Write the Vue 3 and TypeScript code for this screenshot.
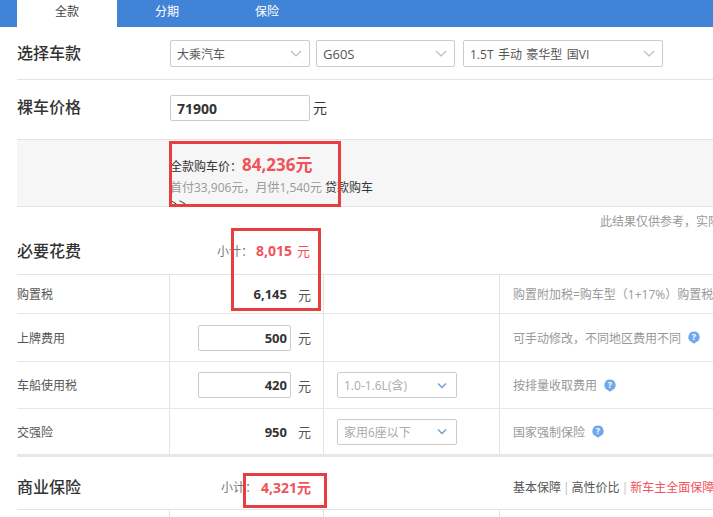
<script setup lang="ts">
interface Row {
  name: string
  h: number
  value: string
  input: boolean
  opt: string
  note: string
  help: boolean
}
const tabs: string[] = ['全款', '分期', '保险']
const selects: { text: string; cls: string }[] = [
  { text: '大乘汽车', cls: 's1' },
  { text: 'G60S', cls: 's2' },
  { text: '1.5T 手动 豪华型 国VI', cls: 's3' },
]
const rows: Row[] = [
  { name: '购置税', h: 39, value: '6,145', input: false, opt: '', note: '购置附加税=购车型（1+17%）购置税', help: false },
  { name: '上牌费用', h: 48, value: '500', input: true, opt: '', note: '可手动修改，不同地区费用不同', help: true },
  { name: '车船使用税', h: 47, value: '420', input: true, opt: '1.0-1.6L(含)', note: '按排量收取费用', help: true },
  { name: '交强险', h: 46, value: '950', input: false, opt: '家用6座以下', note: '国家强制保险', help: true },
]
</script>

<template>
  <div class="page">
    <nav class="tabs">
      <span v-for="(t, i) in tabs" :key="t" class="tab" :class="{ on: i === 0 }">{{ t }}</span>
    </nav>

    <section class="line pick">
      <h2 class="title">选择车款</h2>
      <div v-for="s in selects" :key="s.text" class="select" :class="s.cls">
        <span>{{ s.text }}</span>
        <svg class="chev" width="12" height="7" viewBox="0 0 12 7"><path d="M1 1l5 5 5-5" fill="none" stroke="#bbb" stroke-width="1.2" /></svg>
      </div>
    </section>

    <section class="bare">
      <h2 class="title">裸车价格</h2>
      <div class="price-box">71900</div>
      <span class="yuan-big">元</span>
    </section>

    <section class="summary">
      <div class="sum-total">全款购车价：<b>84,236元</b></div>
      <div class="sum-sub"><span class="grey">首付33,906元，月供1,540元</span> 贷款购车</div>
      <div class="sum-more">&gt;&gt;</div>
    </section>

    <p class="disclaimer">此结果仅供参考，实际费用以当地为准</p>

    <section class="subhead need">
      <h2 class="title">必要花费</h2>
      <span class="sub-label">小计：</span>
      <b class="sub-val">8,015</b>
      <b class="sub-unit">元</b>
    </section>

    <div class="table">
      <div v-for="r in rows" :key="r.name" class="row" :style="{ height: r.h + 'px' }">
        <div class="c1">{{ r.name }}</div>
        <div class="c2">
          <span v-if="r.input" class="num-box">{{ r.value }}</span>
          <b v-else class="num">{{ r.value }}</b>
          <span class="unit">元</span>
        </div>
        <div class="c3">
          <div v-if="r.opt" class="opt">
            <span>{{ r.opt }}</span>
            <svg width="12" height="7" viewBox="0 0 12 7"><path d="M2 1.5l4 4 4-4" fill="none" stroke="#6f9fd0" stroke-width="1.4" /></svg>
          </div>
        </div>
        <div class="c4">
          <span>{{ r.note }}</span>
          <svg v-if="r.help" class="help" width="12" height="13" viewBox="0 0 12 13">
            <path d="M6 .4a5.6 5.6 0 0 1 2.4 10.66L6 12.8l-2.4-1.74A5.6 5.6 0 0 1 6 .4z" fill="#6fa8ee" />
            <text x="6" y="9" text-anchor="middle" class="help-q">?</text>
          </svg>
        </div>
      </div>
    </div>

    <section class="subhead biz">
      <h2 class="title">商业保险</h2>
      <span class="biz-label">小计：</span>
      <b class="biz-val">4,321元</b>
      <div class="plans">
        <span>基本保障</span><i>|</i><span>高性价比</span><i>|</i><span class="red">新车主全面保障</span>
      </div>
    </section>

    <div class="row stub">
      <div class="c1"></div>
      <div class="c2"></div>
      <div class="c3"></div>
      <div class="c4"></div>
    </div>

    <div class="mark m1"></div>
    <div class="mark m2"></div>
    <div class="mark m3"></div>
  </div>
</template>

<style>
html, body { margin: 0; background: #fff; overflow: hidden; }
</style>

<style scoped>
.page {
  position: relative;
  width: 713px;
  height: 517px;
  overflow: hidden;
  background: #fff;
  color: #333;
  font-family: "Open Sans", "Noto Sans CJK SC", sans-serif;
  font-size: 12px;
  white-space: nowrap;
}
.tabs {
  display: flex;
  height: 27px;
  padding-left: 17px;
  background: #4183d7;
}
.tab {
  width: 100px;
  padding-top: 2px;
  text-align: center;
  line-height: 19px;
  color: #fff;
  box-sizing: border-box;
}
.tab.on { background: #fff; color: #444; }
.title {
  margin: 0;
  font-size: 16px;
  font-weight: 500;
  line-height: 24px;
  color: #333;
}
.line.pick {
  display: flex;
  align-items: center;
  margin-left: 17px;
  padding-top: 1px;
  box-sizing: border-box;
  border-bottom: 1px solid #e3e3e3;
  height: 53px;
}
.pick .title { width: 153px; margin-bottom: 2px; }
.select {
  display: flex;
  align-items: center;
  justify-content: space-between;
  box-sizing: border-box;
  height: 27px;
  padding: 0 7px 0 6px;
  border: 1px solid #ccc;
  border-radius: 2px;
  color: #555;
}
.s1 { width: 140px; margin-right: 6px; }
.s2 { width: 139px; margin-right: 8px; font-size: 13px; }
.s3 { width: 200px; word-spacing: 1.3px; }
.bare {
  display: flex;
  align-items: center;
  height: 59px;
  padding-left: 17px;
  padding-bottom: 3px;
  box-sizing: border-box;
}
.bare .title { width: 153px; margin-bottom: 3px; }
.price-box {
  box-sizing: border-box;
  width: 140px;
  height: 26px;
  padding-left: 6px;
  line-height: 25px;
  border: 1px solid #ccc;
  border-radius: 2px;
  font-size: 14px;
  font-weight: 700;
}
.yuan-big { margin-left: 3px; margin-bottom: 3px; font-size: 14px; }
.summary {
  box-sizing: border-box;
  height: 68px;
  margin-left: 17px;
  padding: 14px 0 0 153px;
  background: #f6f6f6;
  border-top: 1px solid #e3e3e3;
  border-bottom: 1px solid #e3e3e3;
  overflow: hidden;
}
.sum-total { height: 22px; line-height: 22px; }
.sum-total b { font-size: 17px; font-weight: 700; color: #f0525a; }
.sum-sub { line-height: 18px; margin-top: 3px; }
.grey { color: #999; }
.sum-more { line-height: 14px; letter-spacing: 2px; }
.disclaimer {
  margin: 0;
  height: 28px;
  padding-left: 600px;
  line-height: 29px;
  color: #999;
}
.subhead {
  display: flex;
  align-items: center;
  margin-left: 17px;
  box-sizing: border-box;
  position: relative;
}
.subhead > * { flex: none; }
.need { height: 39px; padding-bottom: 8px; }
.need .title { width: 200px; }
.sub-label { color: #777; width: 39px; }
.sub-val { color: #f0525a; font-size: 14px; font-weight: 700; width: 41px; }
.sub-unit { color: #f0525a; font-size: 13px; font-weight: 400; }
.table { margin-left: 17px; border-top: 1px solid #e3e3e3; }
.row {
  display: grid;
  grid-template-columns: 153px 154px 176px 1fr;
  box-sizing: border-box;
  border-bottom: 1px solid #e8e8e8;
}
.row > div {
  display: flex;
  align-items: center;
  box-sizing: border-box;
  min-width: 0;
}
.c1 { color: #555; border-right: 1px solid #e3e3e3; }
.c2 {
  justify-content: flex-end;
  padding-right: 8px;
  border-right: 1px solid #e3e3e3;
}
.c3 { padding-left: 13px; border-right: 1px solid #e3e3e3; }
.c4 { padding-left: 13px; color: #999; overflow: hidden; }
.num { font-size: 13px; font-weight: 700; color: #333; }
.num-box {
  box-sizing: border-box;
  width: 93px;
  height: 26px;
  padding-right: 3px;
  line-height: 24px;
  text-align: right;
  font-size: 13px;
  font-weight: 700;
  border: 1px solid #ccc;
  border-radius: 2px;
}
.unit { width: 17px; margin-left: 11px; color: #555; font-size: 13px; text-align: left; }
.num-box + .unit { margin-left: 7px; }
.opt {
  display: flex;
  align-items: center;
  justify-content: space-between;
  box-sizing: border-box;
  width: 120px;
  height: 26px;
  padding: 0 8px 0 6px;
  border: 1px solid #ccc;
  border-radius: 2px;
  color: #aaa;
}
.help { margin-left: 7px; flex: none; }
.help-q { font-size: 9px; font-weight: 700; fill: #fff; font-family: "Open Sans", sans-serif; }
.biz {
  height: 55px;
  padding-top: 7px;
  border-top: 2px solid #e8e8e8;
  border-bottom: 1px solid #e3e3e3;
}
.biz .title { width: 204px; }
.biz-label { color: #777; width: 40px; }
.biz-val { color: #f0525a; font-size: 14px; font-weight: 700; width: 252px; }
.plans { color: #555; }
.plans i { font-style: normal; color: #bbb; margin: 0 2px; }
.red { color: #f0525a; }
.stub { height: 20px; margin-left: 17px; border-bottom: 0; }
.mark {
  position: absolute;
  box-sizing: border-box;
  border: 3px solid #e53f3f;
  pointer-events: none;
}
.m1 { left: 169px; top: 141px; width: 172px; height: 66px; }
.m2 { left: 231px; top: 228px; width: 90px; height: 83px; }
.m3 { left: 243px; top: 473px; width: 84px; height: 35px; }
</style>
